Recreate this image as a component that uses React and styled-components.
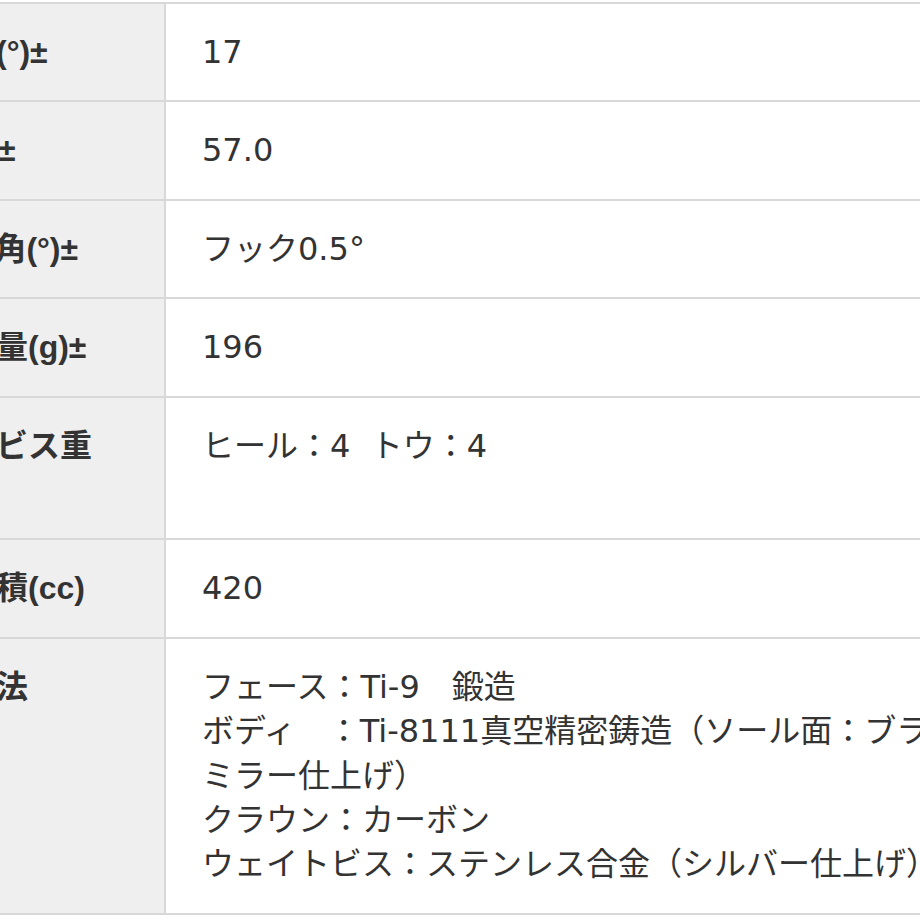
import React from 'react';
import styled, { createGlobalStyle } from 'styled-components';

const GlobalStyle = createGlobalStyle`
  html, body {
    margin: 0;
    padding: 0;
    background: #fff;
  }
`;

const Frame = styled.div`
  width: 920px;
  height: 920px;
  overflow: hidden;
`;

const SpecTable = styled.table`
  border-collapse: collapse;
  table-layout: fixed;
  width: 1320px;
  margin: 2px 0 0 -172px;
  color: #333;
  font-size: 32px;
  line-height: 44.4px;
`;

const Row = styled.tr`
  border-top: 2px solid #d8d8d8;
  border-bottom: 2px solid #d8d8d8;
`;

const Label = styled.th`
  width: 240px;
  padding: 26px 56px 26px 38px;
  background: #efefef;
  border-right: 2px solid #d8d8d8;
  border-left: 2px solid #d8d8d8;
  text-align: left;
  vertical-align: top;
  font-family: "Liberation Sans", "Noto Sans CJK JP", sans-serif;
  font-weight: 700;
`;

const Value = styled.td`
  padding: 26px 36px;
  background: #fff;
  border-right: 2px solid #d8d8d8;
  vertical-align: top;
  font-family: "DejaVu Sans", "Noto Sans CJK JP", sans-serif;
  font-weight: 400;
`;

const Line = styled.span`
  display: block;
  white-space: nowrap;
`;

const specs = [
  { label: 'ロフト角(°)±', lines: ['17'] },
  { label: 'ライ角(°)±', lines: ['57.0'] },
  { label: 'フェース角(°)±', lines: ['フック0.5°'] },
  { label: 'ヘッド重量(g)±', lines: ['196'] },
  { label: 'ウェイトビス重量(g)', lines: ['ヒール：4\u00a0\u00a0トウ：4'] },
  { label: 'ヘッド体積(cc)', lines: ['420'] },
  {
    label: '素材・製法',
    lines: [
      'フェース：Ti-9　鍛造',
      'ボディ　：Ti-8111真空精密鋳造（ソール面：ブラスト＋',
      'ミラー仕上げ）',
      'クラウン：カーボン',
      'ウェイトビス：ステンレス合金（シルバー仕上げ）',
    ],
  },
];

export default function App() {
  return (
    <Frame>
      <GlobalStyle />
      <SpecTable>
        <tbody>
          {specs.map((spec) => (
            <Row key={spec.label}>
              <Label>{spec.label}</Label>
              <Value>
                {spec.lines.map((line) => (
                  <Line key={line}>{line}</Line>
                ))}
              </Value>
            </Row>
          ))}
        </tbody>
      </SpecTable>
    </Frame>
  );
}
